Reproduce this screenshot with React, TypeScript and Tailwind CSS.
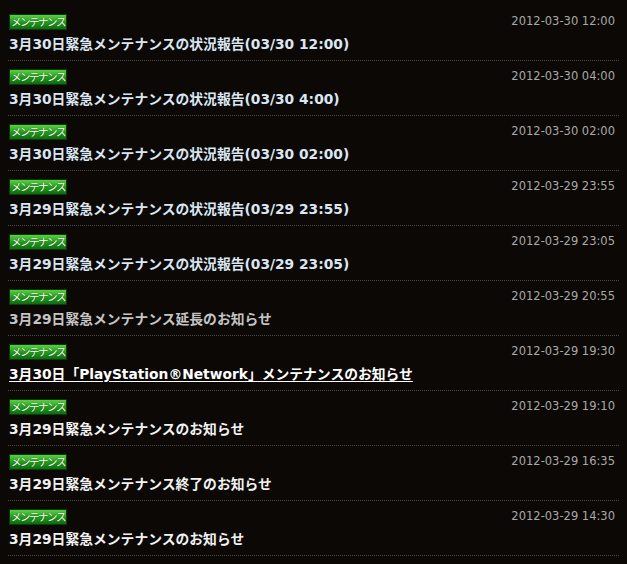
import React from 'react';

type Item = {
    date: string;
    title: string;
    tone: 'new' | 'visited' | 'hover' | 'plain';
};

const items: Item[] = [
    { date: '2012-03-30 12:00', title: '3月30日緊急メンテナンスの状況報告(03/30 12:00)', tone: 'new' },
    { date: '2012-03-30 04:00', title: '3月30日緊急メンテナンスの状況報告(03/30 4:00)', tone: 'new' },
    { date: '2012-03-30 02:00', title: '3月30日緊急メンテナンスの状況報告(03/30 02:00)', tone: 'new' },
    { date: '2012-03-29 23:55', title: '3月29日緊急メンテナンスの状況報告(03/29 23:55)', tone: 'new' },
    { date: '2012-03-29 23:05', title: '3月29日緊急メンテナンスの状況報告(03/29 23:05)', tone: 'new' },
    { date: '2012-03-29 20:55', title: '3月29日緊急メンテナンス延長のお知らせ', tone: 'visited' },
    { date: '2012-03-29 19:30', title: '3月30日「PlayStation®Network」メンテナンスのお知らせ', tone: 'hover' },
    { date: '2012-03-29 19:10', title: '3月29日緊急メンテナンスのお知らせ', tone: 'plain' },
    { date: '2012-03-29 16:35', title: '3月29日緊急メンテナンス終了のお知らせ', tone: 'plain' },
    { date: '2012-03-29 14:30', title: '3月29日緊急メンテナンスのお知らせ', tone: 'plain' },
];

const toneClass: Record<Item['tone'], string> = {
    new: 'text-[#dbe6f3]',
    visited: 'text-[#c4c4c4]',
    hover: 'text-white underline underline-offset-2',
    plain: 'text-[#f2f2f2]',
};

const Badge: React.FC = () => (
    <span className="inline-flex items-center justify-center w-[58px] h-[16px] border border-[#0b3a0b] bg-gradient-to-b from-[#5ad040] via-[#239c1c] to-[#0d6d0d] font-['Noto_Sans_CJK_JP',sans-serif] text-white text-[10.5px] leading-none tracking-[-1.5px] [text-shadow:0_0_1px_#0a3a0a]">
        メンテナンス
    </span>
);

export default function App() {
    return (
        <div className="w-[627px] h-[564px] overflow-hidden bg-[#0c0806] px-2 pt-[6px]">
            {items.map((item, i) => (
                <div key={i} className="border-b border-dotted border-[#4a4642] pt-2 pb-[6px] px-px">
                    <div className="flex items-center justify-between h-[16px]">
                        <Badge />
                        <span className="pr-[3px] font-['DejaVu_Sans',Verdana,sans-serif] text-[11.5px] text-[#a8a8a8]">
                            {item.date}
                        </span>
                    </div>
                    <div
                        className={`mt-1 h-[20px] leading-[20px] font-['DejaVu_Sans','Noto_Sans_CJK_JP',sans-serif] text-[13.8px] font-bold ${toneClass[item.tone]}`}
                    >
                        {item.title}
                    </div>
                </div>
            ))}
        </div>
    );
}
